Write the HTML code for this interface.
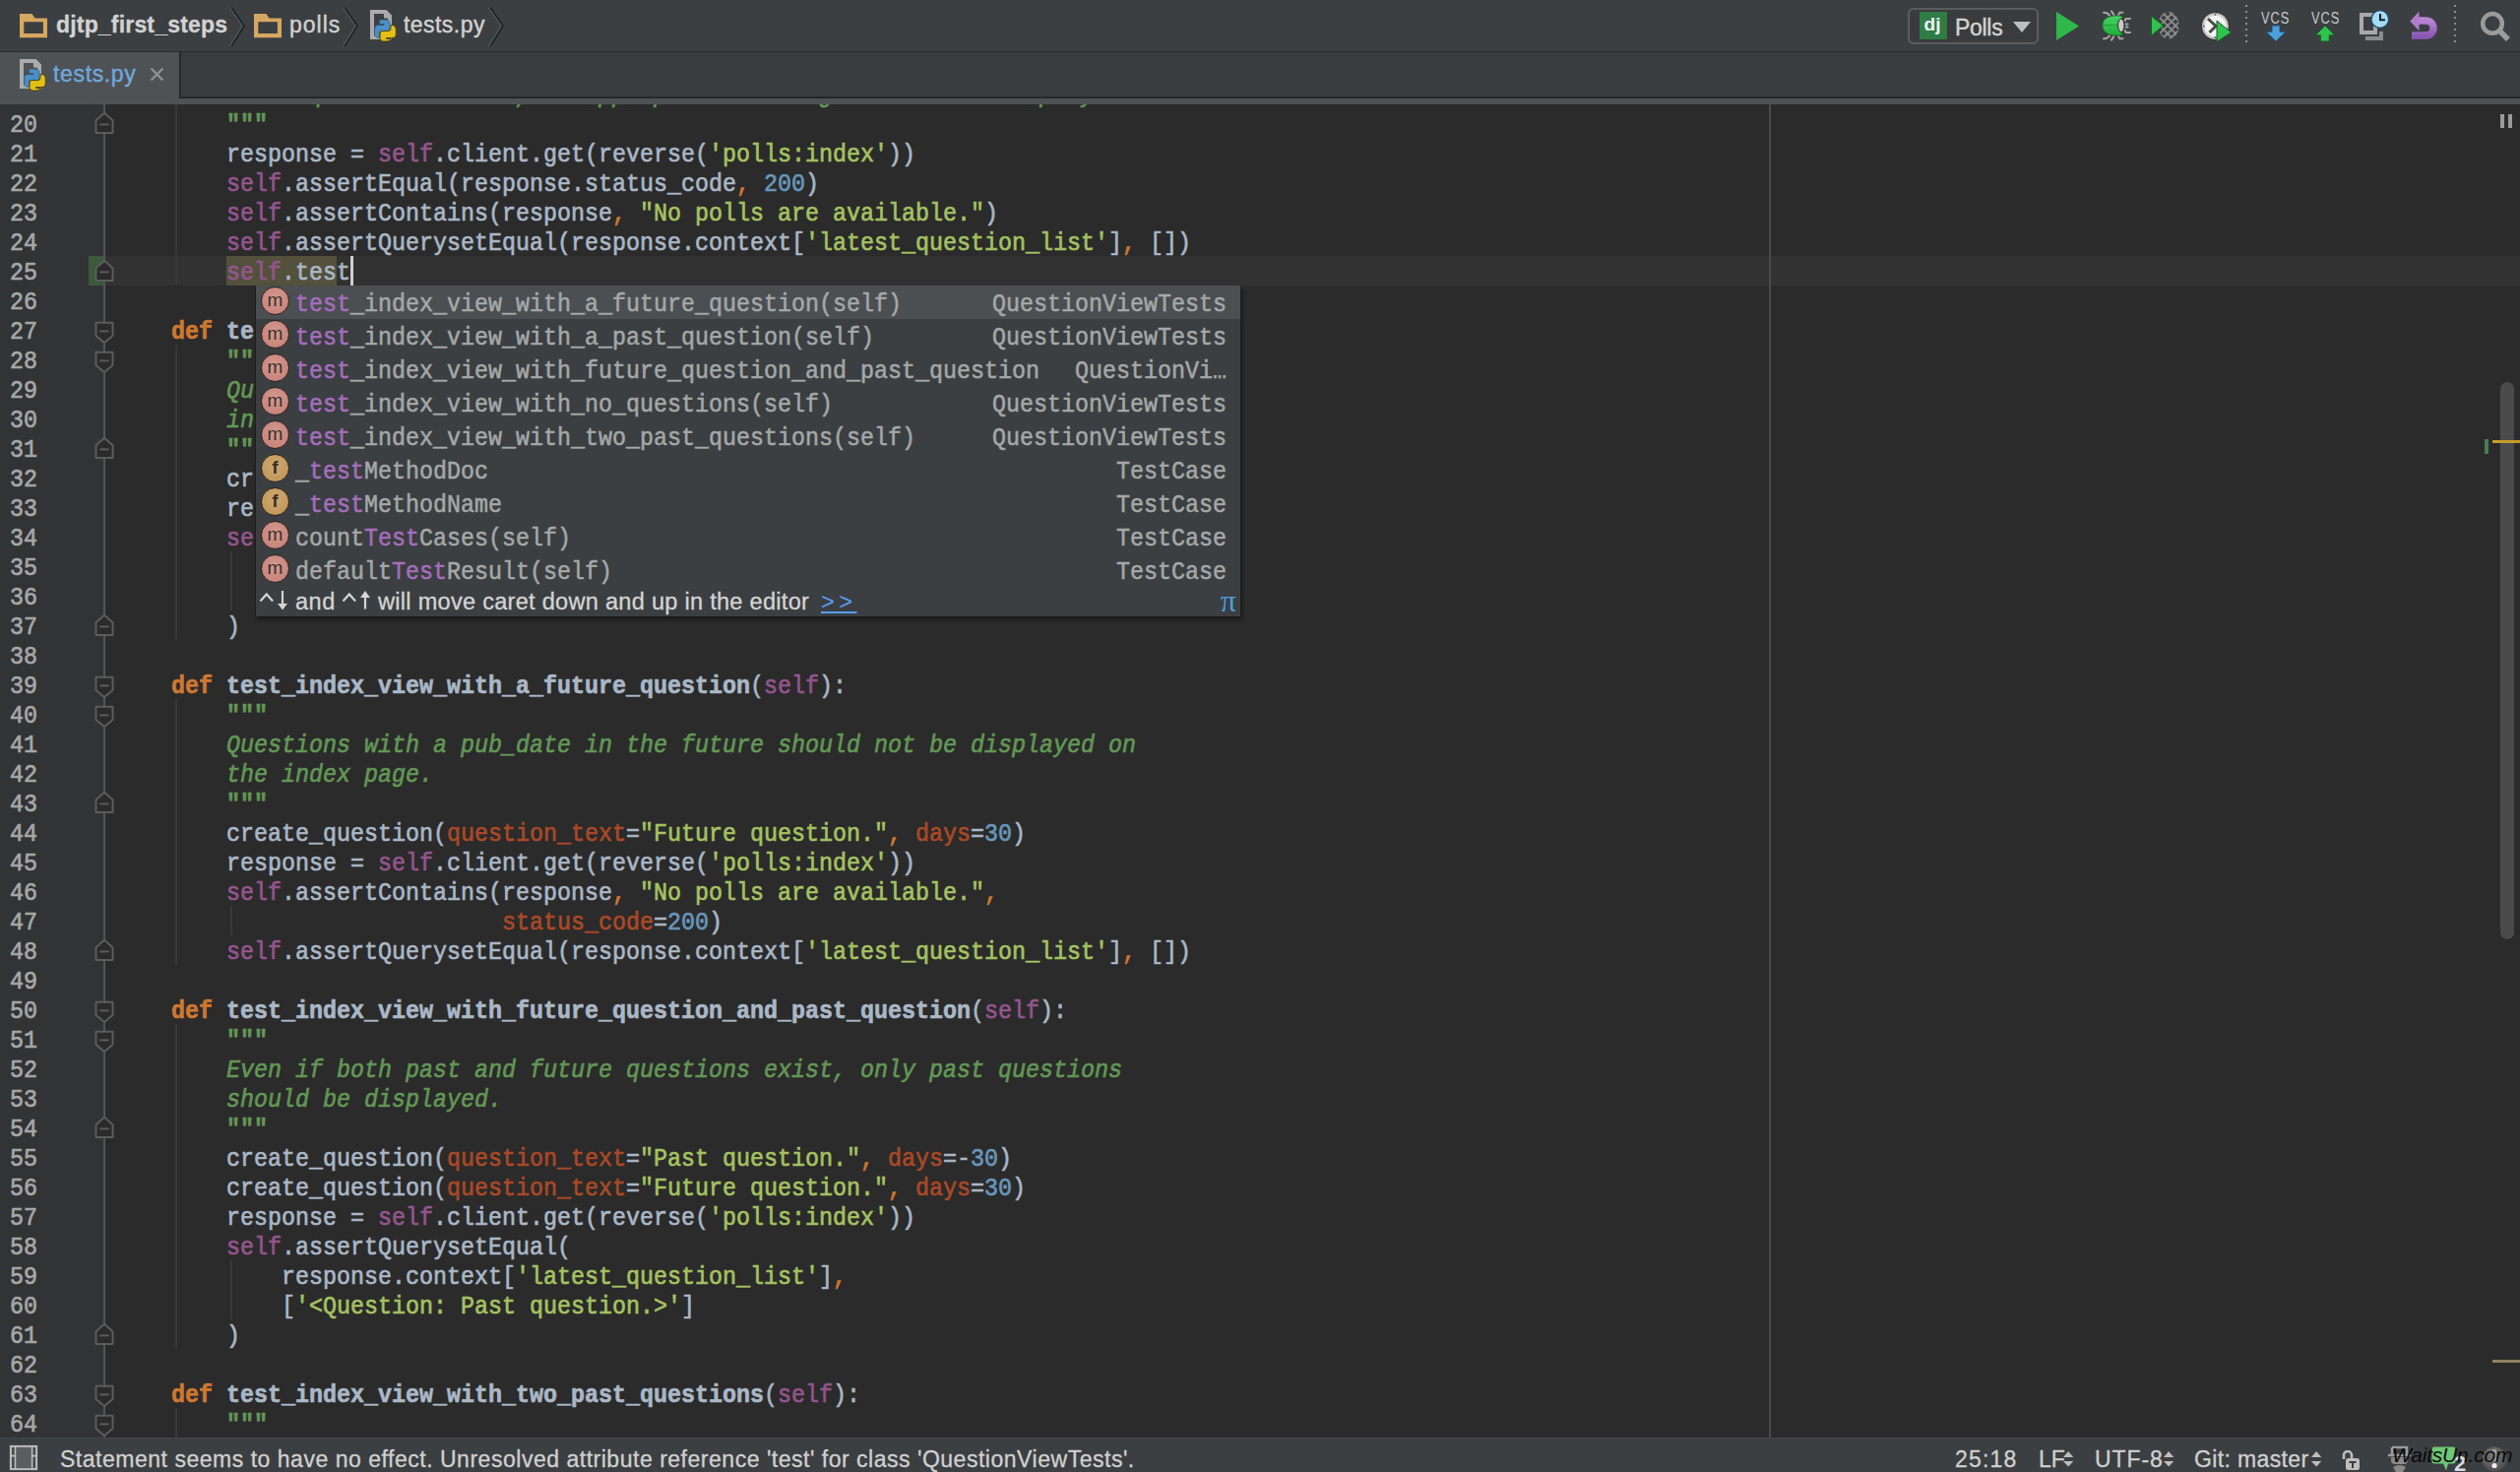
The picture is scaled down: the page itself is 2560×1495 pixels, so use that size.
<!DOCTYPE html>
<html><head><meta charset="utf-8"><title>tests.py</title><style>
*{margin:0;padding:0;box-sizing:border-box}
html,body{width:2560px;height:1495px;overflow:hidden;background:#2B2B2B}
body{position:relative;font-family:"Liberation Sans",sans-serif}
.abs{position:absolute}
#toolbar{position:absolute;left:0;top:0;width:2560px;height:53px;background:#3C3F41;border-bottom:1.4px solid #282A2B}
#tabbar{position:absolute;left:0;top:53px;width:2560px;height:53px;background:#4E5254}
#tabrest{position:absolute;left:182px;top:0;right:0;height:47px;background:#3A3D3F;border-left:2px solid #24282A;border-bottom:2px solid #24282A}
#editor{position:absolute;left:0;top:106px;width:2560px;height:1354px;overflow:hidden;background:#2B2B2B}
#gutter{position:absolute;left:0;top:0;width:105px;height:1354px;background:#313335}
.inner{position:absolute;left:0;top:-106px;width:2560px;height:1495px}
.ln{position:absolute;left:118px;height:30px;white-space:pre;font-family:"Liberation Mono",monospace;font-size:23.333px;line-height:30px;color:#A9B7C6;padding-top:3px;transform:scaleY(1.1);transform-origin:0 24.2px;-webkit-text-stroke:0.6px}
.num{position:absolute;left:0;width:38px;text-align:right;height:30px;white-space:pre;font-family:"Liberation Mono",monospace;font-size:23.333px;line-height:30px;color:#A6A8A8;padding-top:3px;transform:scaleY(1.1);transform-origin:0 24.2px;-webkit-text-stroke:0.6px}
.k{color:#CC7832;font-weight:bold}
.f{color:#A9B7C6;font-weight:bold}
.s{color:#94558D}
.S{color:#94558D}
.D{}
.t{color:#A5C261}
.c{color:#629755;font-style:italic}
.q{color:#629755;font-weight:bold}
.n{color:#6897BB}
.a{color:#AA4926}
.o{color:#CC7832}
.fold{position:absolute;left:96px}
.guide{position:absolute;width:2px;background:#393939}
#popup{position:absolute;left:259px;top:290px;width:1001px;height:336px;background:#3C3F41;border-left:1px solid #1E1E1E;box-shadow:2px 3px 4px rgba(0,0,0,0.45)}
.prow{position:absolute;left:0;width:1000px;height:34px}
.prow.sel{background:#4B4F52}
.pic{position:absolute;left:5px;top:1px;width:29px;height:29px;border-radius:50%;font-family:"Liberation Sans",sans-serif;font-size:19px;line-height:26px;text-align:center;color:#3A2E2E}
.pic.m{background:radial-gradient(circle at 50% 40%,#D29A90 0,#C9857B 70%);border:1.5px solid #2A2222}
.pic.f{background:radial-gradient(circle at 50% 40%,#CFA870 0,#C3985C 70%);border:1.5px solid #2A2420;color:#3A3025}
.pname{position:absolute;left:40px;top:0;height:34px;line-height:34px;padding-top:3px;white-space:pre;font-family:"Liberation Mono",monospace;font-size:23.333px;color:#A4A8A8;transform:scaleY(1.1);transform-origin:0 26px;-webkit-text-stroke:0.5px}
.ptype{position:absolute;right:14px;top:0;height:34px;line-height:34px;padding-top:3px;white-space:pre;font-family:"Liberation Mono",monospace;font-size:23.333px;color:#A4A8A8;transform:scaleY(1.1);transform-origin:0 26px;-webkit-text-stroke:0.5px}
.hl{color:#A46EBC}
#pand{position:absolute;left:40px;top:306px;height:30px;line-height:30px;font-size:23.5px;color:#D4D4D4;white-space:pre;letter-spacing:0.5px;-webkit-text-stroke:0.3px}
#pfoot{position:absolute;left:124px;top:306px;height:30px;line-height:30px;font-size:23.5px;color:#D4D4D4;white-space:pre;letter-spacing:0.3px;-webkit-text-stroke:0.3px}
#plink{position:absolute;left:574px;top:306px;height:30px;line-height:30px;font-size:23.5px;letter-spacing:4.5px;color:#589DF6;white-space:pre;text-decoration:underline}
#pi{position:absolute;right:4px;top:305px;height:30px;line-height:30px;font-size:32px;color:#4E9ED8;font-family:"Liberation Serif",serif}
#status{position:absolute;left:0;top:1460px;width:2560px;height:35px;background:#3C3F41;border-top:1px solid #444749}
.ui{position:absolute;white-space:pre;font-family:"Liberation Sans",sans-serif;color:#D0D0D0}
</style></head>
<body>
<div id="toolbar">
<svg class="abs" style="left:20px;top:14px" width="29" height="25" viewBox="0 0 29 25"><path d="M0 0 H12.5 L15.5 4.6 H28 V24.2 H0 Z" fill="#D5A862"/><rect x="4.3" y="8.2" width="19.6" height="11.8" fill="#3C3F41"/></svg>
<div class="ui" style="left:57px;top:9px;font-size:23px;font-weight:bold;line-height:32px;color:#D2D2D2;letter-spacing:0.18px;-webkit-text-stroke:0.3px">djtp_first_steps</div>
<svg class="abs" style="left:231.5px;top:4px" width="20" height="46" viewBox="0 0 20 46"><path d="M1.5 3.6 L14.5 22.3 L1.5 43.2" fill="none" stroke="#565A5D" stroke-width="1.5"/><path d="M3 3.6 L16 22.3 L3 43.2" fill="none" stroke="#1C1E20" stroke-width="1.6"/></svg>
<svg class="abs" style="left:258px;top:14px" width="29" height="25" viewBox="0 0 29 25"><path d="M0 0 H12.5 L15.5 4.6 H28 V24.2 H0 Z" fill="#D5A862"/><rect x="4.3" y="8.2" width="19.6" height="11.8" fill="#3C3F41"/></svg>
<div class="ui" style="left:294px;top:9px;font-size:23px;line-height:32px;color:#D2D2D2;letter-spacing:1px;-webkit-text-stroke:0.4px">polls</div>
<svg class="abs" style="left:346.8px;top:4px" width="20" height="46" viewBox="0 0 20 46"><path d="M1.5 3.6 L14.5 22.3 L1.5 43.2" fill="none" stroke="#565A5D" stroke-width="1.5"/><path d="M3 3.6 L16 22.3 L3 43.2" fill="none" stroke="#1C1E20" stroke-width="1.6"/></svg>
<svg class="abs" style="left:376px;top:10px" width="28" height="34" viewBox="0 0 28 34"><path fill-rule="evenodd" d="M0 0 H16.5 L22 5.5 V30 H0 Z M4 4 H14 V8.5 H18 V26 H4 Z" fill="#ABABAD"/><path d="M9.5 10 H15.5 Q20 10 20 14 V19 Q20 21.5 17.5 21.5 H11.5 Q9.5 21.5 9.5 23.5 V28.4 H8.5 Q4.5 28.4 4.5 24 V19 Q4.5 15.5 8 15.5 H14 V14.5 H9.5 Z" fill="#4A8FC6" stroke="#2E4A60" stroke-width="0.6"/><path d="M17 32 H13.5 Q10 32 10 28.5 V24 Q10 21.5 12.5 21.5 H18.5 Q21 21.5 21 19 V15.5 H22 Q26.3 15.5 26.3 20 V25 Q26.3 28.5 23 28.5 H16.5 V29.5 H21 Q21 32 17 32 Z" fill="#E3BE17" stroke="#3A3210" stroke-width="0.8"/></svg>
<div class="ui" style="left:410px;top:9px;font-size:23px;line-height:32px;color:#D2D2D2;letter-spacing:0.45px;-webkit-text-stroke:0.4px">tests.py</div>
<svg class="abs" style="left:494.8px;top:4px" width="20" height="46" viewBox="0 0 20 46"><path d="M1.5 3.6 L14.5 22.3 L1.5 43.2" fill="none" stroke="#565A5D" stroke-width="1.5"/><path d="M3 3.6 L16 22.3 L3 43.2" fill="none" stroke="#1C1E20" stroke-width="1.6"/></svg>
<div class="abs" style="left:1938px;top:8px;width:133px;height:37px;border:2px solid #5A5C5E;border-radius:6px;background:#3A3B3C"></div>
<div class="abs" style="left:1950px;top:12px;width:28px;height:28px;background:#2F7D45"></div>
<div class="ui" style="left:1951px;top:10px;width:24px;text-align:center;font-size:19px;font-weight:bold;line-height:30px;color:#F2F2F2">dj</div>
<div class="ui" style="left:1986px;top:12px;font-size:23px;line-height:32px;color:#D4D4D4;-webkit-text-stroke:0.4px;letter-spacing:-0.3px">Polls</div>
<svg class="abs" style="left:2045px;top:22px" width="18" height="11"><path d="M0 0 H18 L9 11 Z" fill="#BDBDBD"/></svg>
<svg class="abs" style="left:2089px;top:12px" width="23" height="29"><path d="M0 0 L23 14.5 L0 29 Z" fill="#2EB84A"/></svg>
<svg class="abs" style="left:2134px;top:10px" width="32" height="32" viewBox="0 0 32 32"><defs><linearGradient id="bg1" x1="0" y1="0" x2="0" y2="1"><stop offset="0" stop-color="#46D263"/><stop offset="1" stop-color="#1DAE38"/></linearGradient></defs><g stroke="#A6A6A6" stroke-width="2" fill="none" stroke-linecap="round"><path d="M3 2.8 Q7 2.5 9.2 6"/><path d="M11 1.4 L13.5 5.3"/><path d="M22.4 2.8 H19.8 Q18.5 3 18 6"/><path d="M3 29.2 Q7 29.5 9.2 26"/><path d="M11 30.6 L13.5 26.7"/><path d="M22.4 29.2 H19.8 Q18.5 29 18 26"/><path d="M30 8.9 H25.8 Q24.8 9.5 24.8 11"/><path d="M25.5 14.6 H27.5"/><path d="M25.5 17.4 H27.5"/><path d="M30 23 H25.8 Q24.8 22.5 24.8 21"/></g><path d="M22 6.3 Q10 4.5 4 9.5 Q1.7 12.5 1.7 16 Q1.7 19.5 4 22.5 Q10 27.5 22 25.7 Z" fill="url(#bg1)" stroke="#1F4F28" stroke-width="0.8"/><path d="M2 15.5 H18" stroke="#1E8E32" stroke-width="0.8"/><ellipse cx="20.8" cy="15.8" rx="3.2" ry="6.8" fill="#C9C9C9" stroke="#262626" stroke-width="1"/></svg>
<svg class="abs" style="left:2184px;top:10px" width="32" height="32" viewBox="0 0 32 32"><defs><clipPath id="cc"><ellipse cx="19" cy="15.8" rx="10.6" ry="13.8"/></clipPath></defs><g clip-path="url(#cc)"><path d="M-38 0 L-6 32 M-38 32 L-6 0 M-30 0 L2 32 M-30 32 L2 0 M-22 0 L10 32 M-22 32 L10 0 M-14 0 L18 32 M-14 32 L18 0 M-6 0 L26 32 M-6 32 L26 0 M2 0 L34 32 M2 32 L34 0 M10 0 L42 32 M10 32 L42 0 M18 0 L50 32 M18 32 L50 0 M26 0 L58 32 M26 32 L58 0 M34 0 L66 32 M34 32 L66 0" stroke="#8C8C8C" stroke-width="1.9" fill="none"/></g><path d="M1.4 6 L14 16 L1.4 26.4 Z" fill="#33C24D" stroke="#1A5A28" stroke-width="1.1"/></svg>
<svg class="abs" style="left:2234px;top:10px" width="36" height="36" viewBox="0 0 36 36"><defs><radialGradient id="pg" cx="0.5" cy="0.5" r="0.5"><stop offset="0.7" stop-color="#F4F4F4"/><stop offset="1" stop-color="#9A9A9A"/></radialGradient></defs><circle cx="16.4" cy="16.5" r="14.2" fill="url(#pg)" stroke="#262626" stroke-width="1"/><circle cx="16.4" cy="4.8" r="1.1" fill="#6A6A6A"/><circle cx="4.9" cy="16.5" r="1.1" fill="#6A6A6A"/><circle cx="16.4" cy="28.2" r="1.1" fill="#6A6A6A"/><path d="M9 9 L17 16.5 L10.5 23" stroke="#4A4A4A" stroke-width="3" fill="none"/><path d="M18 11 L32.6 23 L18 32.6 Z" fill="#2FC24C" stroke="#1B5A26" stroke-width="1"/></svg>
<div class="abs" style="left:2281px;top:5px;width:2.4px;height:40px;background:repeating-linear-gradient(to bottom,#8E8E8E 0 2.4px,transparent 2.4px 6px)"></div>
<div class="abs" style="left:2493px;top:5px;width:2.4px;height:40px;background:repeating-linear-gradient(to bottom,#8E8E8E 0 2.4px,transparent 2.4px 6px)"></div>
<div class="ui" style="left:2297px;top:10px;font-size:16px;line-height:18px;color:#C8C8C8;transform:scaleX(0.8);transform-origin:0 0;letter-spacing:1.2px">VCS</div>
<svg class="abs" style="left:2301px;top:25px" width="22" height="18" viewBox="0 0 22 18"><path d="M7 1 H15 V7.2 H21 L11 17 L1 7.2 H7 Z" fill="#4BA0DA" stroke="#1F4E70" stroke-width="0.9"/></svg>
<div class="ui" style="left:2348px;top:10px;font-size:16px;line-height:18px;color:#C8C8C8;transform:scaleX(0.8);transform-origin:0 0;letter-spacing:1.2px">VCS</div>
<svg class="abs" style="left:2351px;top:25px" width="22" height="18" viewBox="0 0 22 18"><path d="M6.5 17 H15.2 V10.7 H20.7 L11 1 L1.3 10.7 H6.5 Z" fill="#2FC24C" stroke="#1B5A26" stroke-width="0.9"/></svg>
<svg class="abs" style="left:2396px;top:9px" width="34" height="34" viewBox="0 0 34 34"><path d="M7 30 H23 V23" fill="none" stroke="#8C8C8C" stroke-width="4"/><rect x="3" y="6" width="14" height="18" fill="none" stroke="#A8A8A8" stroke-width="4"/><circle cx="21.8" cy="10.5" r="8.8" fill="#A6DBF4" stroke="#1E4E6E" stroke-width="1.3"/><path d="M22 5 V11.2 H27" stroke="#10202A" stroke-width="2" fill="none"/></svg>
<svg class="abs" style="left:2446px;top:10px" width="32" height="32" viewBox="0 0 32 32"><defs><linearGradient id="ug" x1="0" y1="0" x2="0" y2="1"><stop offset="0" stop-color="#B884D2"/><stop offset="1" stop-color="#8C58B6"/></linearGradient></defs><path d="M10 11 H18.5 A7.5 7.5 0 0 1 18.5 26 H4" fill="none" stroke="url(#ug)" stroke-width="7.5"/><path d="M2.3 11.5 L11.5 1.5 V21.5 Z" fill="#B07CCC"/></svg>
<svg class="abs" style="left:2516px;top:8px" width="36" height="36" viewBox="0 0 36 36"><circle cx="16" cy="15.9" r="9.8" fill="none" stroke="#9B9B9B" stroke-width="4.5"/><path d="M23.5 23.5 L32 32" stroke="#9B9B9B" stroke-width="5.5"/></svg>
</div>
<div id="tabbar"><div id="tabrest"></div>
<svg class="abs" style="left:20px;top:7px" width="28" height="34" viewBox="0 0 28 34"><path fill-rule="evenodd" d="M0 0 H16.5 L22 5.5 V30 H0 Z M4 4 H14 V8.5 H18 V26 H4 Z" fill="#ABABAD"/><path d="M9.5 10 H15.5 Q20 10 20 14 V19 Q20 21.5 17.5 21.5 H11.5 Q9.5 21.5 9.5 23.5 V28.4 H8.5 Q4.5 28.4 4.5 24 V19 Q4.5 15.5 8 15.5 H14 V14.5 H9.5 Z" fill="#4A8FC6" stroke="#2E4A60" stroke-width="0.6"/><path d="M17 32 H13.5 Q10 32 10 28.5 V24 Q10 21.5 12.5 21.5 H18.5 Q21 21.5 21 19 V15.5 H22 Q26.3 15.5 26.3 20 V25 Q26.3 28.5 23 28.5 H16.5 V29.5 H21 Q21 32 17 32 Z" fill="#E3BE17" stroke="#3A3210" stroke-width="0.8"/></svg>
<div class="ui" style="left:54px;top:6px;font-size:23px;line-height:32px;color:#6FA8DC;letter-spacing:0.65px;-webkit-text-stroke:0.4px">tests.py</div>
<svg class="abs" style="left:152px;top:15px" width="15" height="15"><path d="M1.5 1.5 L13.5 13.5 M13.5 1.5 L1.5 13.5" stroke="#8E9193" stroke-width="2.4"/></svg>
</div>
<div id="editor"><div class="inner">
<div class="abs" style="left:0;top:106px;width:105px;height:1354px;background:#313335"></div>
<div class="abs" style="left:105px;top:260px;width:2455px;height:30px;background:#323232"></div>
<div class="abs" style="left:90px;top:260px;width:15px;height:30px;background:#3A5A3A"></div>
<div class="abs" style="left:230px;top:260px;width:112px;height:30px;background:#53513B"></div>
<div class="abs" style="left:1797px;top:106px;width:2px;height:1354px;background:#4A4A4A"></div>
<div class="abs" style="left:105px;top:106px;width:2px;height:1354px;background:#555555"></div>
<div class="guide" style="left:178px;top:80px;height:210px"></div>
<div class="guide" style="left:178px;top:350px;height:300px"></div>
<div class="guide" style="left:178px;top:710px;height:270px"></div>
<div class="guide" style="left:178px;top:1040px;height:330px"></div>
<div class="guide" style="left:178px;top:1430px;height:60px"></div>
<div class="guide" style="left:234px;top:560px;height:60px"></div>
<div class="guide" style="left:234px;top:920px;height:30px"></div>
<div class="guide" style="left:234px;top:1280px;height:60px"></div>
<div class="num" style="top:80px">19</div>
<div class="num" style="top:110px">20</div>
<div class="num" style="top:140px">21</div>
<div class="num" style="top:170px">22</div>
<div class="num" style="top:200px">23</div>
<div class="num" style="top:230px">24</div>
<div class="num" style="top:260px">25</div>
<div class="num" style="top:290px">26</div>
<div class="num" style="top:320px">27</div>
<div class="num" style="top:350px">28</div>
<div class="num" style="top:380px">29</div>
<div class="num" style="top:410px">30</div>
<div class="num" style="top:440px">31</div>
<div class="num" style="top:470px">32</div>
<div class="num" style="top:500px">33</div>
<div class="num" style="top:530px">34</div>
<div class="num" style="top:560px">35</div>
<div class="num" style="top:590px">36</div>
<div class="num" style="top:620px">37</div>
<div class="num" style="top:650px">38</div>
<div class="num" style="top:680px">39</div>
<div class="num" style="top:710px">40</div>
<div class="num" style="top:740px">41</div>
<div class="num" style="top:770px">42</div>
<div class="num" style="top:800px">43</div>
<div class="num" style="top:830px">44</div>
<div class="num" style="top:860px">45</div>
<div class="num" style="top:890px">46</div>
<div class="num" style="top:920px">47</div>
<div class="num" style="top:950px">48</div>
<div class="num" style="top:980px">49</div>
<div class="num" style="top:1010px">50</div>
<div class="num" style="top:1040px">51</div>
<div class="num" style="top:1070px">52</div>
<div class="num" style="top:1100px">53</div>
<div class="num" style="top:1130px">54</div>
<div class="num" style="top:1160px">55</div>
<div class="num" style="top:1190px">56</div>
<div class="num" style="top:1220px">57</div>
<div class="num" style="top:1250px">58</div>
<div class="num" style="top:1280px">59</div>
<div class="num" style="top:1310px">60</div>
<div class="num" style="top:1340px">61</div>
<div class="num" style="top:1370px">62</div>
<div class="num" style="top:1400px">63</div>
<div class="num" style="top:1430px">64</div>
<svg class="fold" style="top:113px" width="20" height="27" viewBox="0 0 20 27"><path d="M1.5 22 V9.2 L10 1.7 L18.5 9.2 V22 Z" fill="#2B2B2B" stroke="#5C5C5C" stroke-width="2" stroke-linejoin="round"/><path d="M5.3 13.4 H14.7" stroke="#5C5C5C" stroke-width="2"/></svg>
<svg class="fold" style="top:263px" width="20" height="27" viewBox="0 0 20 27"><path d="M1.5 22 V9.2 L10 1.7 L18.5 9.2 V22 Z" fill="#2B2B2B" stroke="#5C5C5C" stroke-width="2" stroke-linejoin="round"/><path d="M5.3 13.4 H14.7" stroke="#5C5C5C" stroke-width="2"/></svg>
<svg class="fold" style="top:443px" width="20" height="27" viewBox="0 0 20 27"><path d="M1.5 22 V9.2 L10 1.7 L18.5 9.2 V22 Z" fill="#2B2B2B" stroke="#5C5C5C" stroke-width="2" stroke-linejoin="round"/><path d="M5.3 13.4 H14.7" stroke="#5C5C5C" stroke-width="2"/></svg>
<svg class="fold" style="top:623px" width="20" height="27" viewBox="0 0 20 27"><path d="M1.5 22 V9.2 L10 1.7 L18.5 9.2 V22 Z" fill="#2B2B2B" stroke="#5C5C5C" stroke-width="2" stroke-linejoin="round"/><path d="M5.3 13.4 H14.7" stroke="#5C5C5C" stroke-width="2"/></svg>
<svg class="fold" style="top:803px" width="20" height="27" viewBox="0 0 20 27"><path d="M1.5 22 V9.2 L10 1.7 L18.5 9.2 V22 Z" fill="#2B2B2B" stroke="#5C5C5C" stroke-width="2" stroke-linejoin="round"/><path d="M5.3 13.4 H14.7" stroke="#5C5C5C" stroke-width="2"/></svg>
<svg class="fold" style="top:953px" width="20" height="27" viewBox="0 0 20 27"><path d="M1.5 22 V9.2 L10 1.7 L18.5 9.2 V22 Z" fill="#2B2B2B" stroke="#5C5C5C" stroke-width="2" stroke-linejoin="round"/><path d="M5.3 13.4 H14.7" stroke="#5C5C5C" stroke-width="2"/></svg>
<svg class="fold" style="top:1133px" width="20" height="27" viewBox="0 0 20 27"><path d="M1.5 22 V9.2 L10 1.7 L18.5 9.2 V22 Z" fill="#2B2B2B" stroke="#5C5C5C" stroke-width="2" stroke-linejoin="round"/><path d="M5.3 13.4 H14.7" stroke="#5C5C5C" stroke-width="2"/></svg>
<svg class="fold" style="top:1343px" width="20" height="27" viewBox="0 0 20 27"><path d="M1.5 22 V9.2 L10 1.7 L18.5 9.2 V22 Z" fill="#2B2B2B" stroke="#5C5C5C" stroke-width="2" stroke-linejoin="round"/><path d="M5.3 13.4 H14.7" stroke="#5C5C5C" stroke-width="2"/></svg>
<svg class="fold" style="top:323px" width="20" height="27" viewBox="0 0 20 27"><path d="M1.5 4.7 V17.9 L10 25 L18.5 17.9 V4.7 Z" fill="#2B2B2B" stroke="#5C5C5C" stroke-width="2" stroke-linejoin="round"/><path d="M5.3 13.4 H14.7" stroke="#5C5C5C" stroke-width="2"/></svg>
<svg class="fold" style="top:353px" width="20" height="27" viewBox="0 0 20 27"><path d="M1.5 4.7 V17.9 L10 25 L18.5 17.9 V4.7 Z" fill="#2B2B2B" stroke="#5C5C5C" stroke-width="2" stroke-linejoin="round"/><path d="M5.3 13.4 H14.7" stroke="#5C5C5C" stroke-width="2"/></svg>
<svg class="fold" style="top:683px" width="20" height="27" viewBox="0 0 20 27"><path d="M1.5 4.7 V17.9 L10 25 L18.5 17.9 V4.7 Z" fill="#2B2B2B" stroke="#5C5C5C" stroke-width="2" stroke-linejoin="round"/><path d="M5.3 13.4 H14.7" stroke="#5C5C5C" stroke-width="2"/></svg>
<svg class="fold" style="top:713px" width="20" height="27" viewBox="0 0 20 27"><path d="M1.5 4.7 V17.9 L10 25 L18.5 17.9 V4.7 Z" fill="#2B2B2B" stroke="#5C5C5C" stroke-width="2" stroke-linejoin="round"/><path d="M5.3 13.4 H14.7" stroke="#5C5C5C" stroke-width="2"/></svg>
<svg class="fold" style="top:1013px" width="20" height="27" viewBox="0 0 20 27"><path d="M1.5 4.7 V17.9 L10 25 L18.5 17.9 V4.7 Z" fill="#2B2B2B" stroke="#5C5C5C" stroke-width="2" stroke-linejoin="round"/><path d="M5.3 13.4 H14.7" stroke="#5C5C5C" stroke-width="2"/></svg>
<svg class="fold" style="top:1043px" width="20" height="27" viewBox="0 0 20 27"><path d="M1.5 4.7 V17.9 L10 25 L18.5 17.9 V4.7 Z" fill="#2B2B2B" stroke="#5C5C5C" stroke-width="2" stroke-linejoin="round"/><path d="M5.3 13.4 H14.7" stroke="#5C5C5C" stroke-width="2"/></svg>
<svg class="fold" style="top:1403px" width="20" height="27" viewBox="0 0 20 27"><path d="M1.5 4.7 V17.9 L10 25 L18.5 17.9 V4.7 Z" fill="#2B2B2B" stroke="#5C5C5C" stroke-width="2" stroke-linejoin="round"/><path d="M5.3 13.4 H14.7" stroke="#5C5C5C" stroke-width="2"/></svg>
<svg class="fold" style="top:1433px" width="20" height="27" viewBox="0 0 20 27"><path d="M1.5 4.7 V17.9 L10 25 L18.5 17.9 V4.7 Z" fill="#2B2B2B" stroke="#5C5C5C" stroke-width="2" stroke-linejoin="round"/><path d="M5.3 13.4 H14.7" stroke="#5C5C5C" stroke-width="2"/></svg>
<div class="ln" style="top:80px">        <span class="c">If no questions exist, an appropriate message should be displayed.</span></div>
<div class="ln" style="top:110px">        <span class="q">"""</span></div>
<div class="ln" style="top:140px">        response = <span class="s">self</span>.client.get(reverse(<span class="t">'polls:index'</span>))</div>
<div class="ln" style="top:170px">        <span class="s">self</span>.assertEqual(response.status_code<span class="o">, </span><span class="n">200</span>)</div>
<div class="ln" style="top:200px">        <span class="s">self</span>.assertContains(response<span class="o">, </span><span class="t">"No polls are available."</span>)</div>
<div class="ln" style="top:230px">        <span class="s">self</span>.assertQuerysetEqual(response.context[<span class="t">'latest_question_list'</span>]<span class="o">, </span>[])</div>
<div class="ln" style="top:260px">        <span class="S">self</span><span class="D">.tes</span>t</div>
<div class="ln" style="top:320px">    <span class="k">def </span><span class="f">test_index_view_with_a_past_question</span>(<span class="s">self</span>):</div>
<div class="ln" style="top:350px">        <span class="q">"""</span></div>
<div class="ln" style="top:380px">        <span class="c">Questions with a pub_date in the past should be displayed on the</span></div>
<div class="ln" style="top:410px">        <span class="c">index page.</span></div>
<div class="ln" style="top:440px">        <span class="q">"""</span></div>
<div class="ln" style="top:470px">        create_question(</div>
<div class="ln" style="top:500px">        response = </div>
<div class="ln" style="top:530px">        <span class="s">self</span>.assertQuerysetEqual(</div>
<div class="ln" style="top:620px">        )</div>
<div class="ln" style="top:680px">    <span class="k">def </span><span class="f">test_index_view_with_a_future_question</span>(<span class="s">self</span>):</div>
<div class="ln" style="top:710px">        <span class="q">"""</span></div>
<div class="ln" style="top:740px">        <span class="c">Questions with a pub_date in the future should not be displayed on</span></div>
<div class="ln" style="top:770px">        <span class="c">the index page.</span></div>
<div class="ln" style="top:800px">        <span class="q">"""</span></div>
<div class="ln" style="top:830px">        create_question(<span class="a">question_text</span>=<span class="t">"Future question."</span><span class="o">, </span><span class="a">days</span>=<span class="n">30</span>)</div>
<div class="ln" style="top:860px">        response = <span class="s">self</span>.client.get(reverse(<span class="t">'polls:index'</span>))</div>
<div class="ln" style="top:890px">        <span class="s">self</span>.assertContains(response<span class="o">, </span><span class="t">"No polls are available."</span><span class="o">,</span></div>
<div class="ln" style="top:920px">                            <span class="a">status_code</span>=<span class="n">200</span>)</div>
<div class="ln" style="top:950px">        <span class="s">self</span>.assertQuerysetEqual(response.context[<span class="t">'latest_question_list'</span>]<span class="o">, </span>[])</div>
<div class="ln" style="top:1010px">    <span class="k">def </span><span class="f">test_index_view_with_future_question_and_past_question</span>(<span class="s">self</span>):</div>
<div class="ln" style="top:1040px">        <span class="q">"""</span></div>
<div class="ln" style="top:1070px">        <span class="c">Even if both past and future questions exist, only past questions</span></div>
<div class="ln" style="top:1100px">        <span class="c">should be displayed.</span></div>
<div class="ln" style="top:1130px">        <span class="q">"""</span></div>
<div class="ln" style="top:1160px">        create_question(<span class="a">question_text</span>=<span class="t">"Past question."</span><span class="o">, </span><span class="a">days</span>=-<span class="n">30</span>)</div>
<div class="ln" style="top:1190px">        create_question(<span class="a">question_text</span>=<span class="t">"Future question."</span><span class="o">, </span><span class="a">days</span>=<span class="n">30</span>)</div>
<div class="ln" style="top:1220px">        response = <span class="s">self</span>.client.get(reverse(<span class="t">'polls:index'</span>))</div>
<div class="ln" style="top:1250px">        <span class="s">self</span>.assertQuerysetEqual(</div>
<div class="ln" style="top:1280px">            response.context[<span class="t">'latest_question_list'</span>]<span class="o">,</span></div>
<div class="ln" style="top:1310px">            [<span class="t">'&lt;Question: Past question.&gt;'</span>]</div>
<div class="ln" style="top:1340px">        )</div>
<div class="ln" style="top:1400px">    <span class="k">def </span><span class="f">test_index_view_with_two_past_questions</span>(<span class="s">self</span>):</div>
<div class="ln" style="top:1430px">        <span class="q">"""</span></div>
<div class="abs" style="left:356px;top:260px;width:3px;height:30px;background:#D0D0D0"></div>
<div class="abs" style="left:2540px;top:116px;width:4px;height:14px;background:#9A9A9A"></div><div class="abs" style="left:2548px;top:116px;width:4px;height:14px;background:#9A9A9A"></div>
<div class="abs" style="left:2540px;top:388px;width:14px;height:566px;border-radius:7px;background:#4B4B4B"></div>
<div class="abs" style="left:2532px;top:447px;width:28px;height:3px;background:#C59A2A"></div>
<div class="abs" style="left:2524px;top:446px;width:4px;height:15px;background:#4A7A58"></div>
<div class="abs" style="left:2532px;top:1381px;width:28px;height:3px;background:#8C8162"></div>
<div id="popup">
<div class="prow sel" style="top:0px"><div class="pic m">m</div><div class="pname"><span class="hl">test</span>_index_view_with_a_future_question(self)</div><div class="ptype">QuestionViewTests</div></div>
<div class="prow" style="top:34px"><div class="pic m">m</div><div class="pname"><span class="hl">test</span>_index_view_with_a_past_question(self)</div><div class="ptype">QuestionViewTests</div></div>
<div class="prow" style="top:68px"><div class="pic m">m</div><div class="pname"><span class="hl">test</span>_index_view_with_future_question_and_past_question</div><div class="ptype">QuestionVi…</div></div>
<div class="prow" style="top:102px"><div class="pic m">m</div><div class="pname"><span class="hl">test</span>_index_view_with_no_questions(self)</div><div class="ptype">QuestionViewTests</div></div>
<div class="prow" style="top:136px"><div class="pic m">m</div><div class="pname"><span class="hl">test</span>_index_view_with_two_past_questions(self)</div><div class="ptype">QuestionViewTests</div></div>
<div class="prow" style="top:170px"><div class="pic f">f</div><div class="pname">_<span class="hl">test</span>MethodDoc</div><div class="ptype">TestCase</div></div>
<div class="prow" style="top:204px"><div class="pic f">f</div><div class="pname">_<span class="hl">test</span>MethodName</div><div class="ptype">TestCase</div></div>
<div class="prow" style="top:238px"><div class="pic m">m</div><div class="pname">count<span class="hl">Test</span>Cases(self)</div><div class="ptype">TestCase</div></div>
<div class="prow" style="top:272px"><div class="pic m">m</div><div class="pname">default<span class="hl">Test</span>Result(self)</div><div class="ptype">TestCase</div></div>
<svg class="abs" style="left:0;top:306px" width="130" height="30" viewBox="0 0 130 30"><g stroke="#D4D4D4" stroke-width="2.2" fill="none"><path d="M4.5 14.5 L10.8 7.5 L17.1 14.5"/><path d="M27 4 V19"/><path d="M88.5 14.5 L94.8 7.5 L101.1 14.5"/><path d="M111 8 V22.5"/></g><path d="M22 17 H32 L27 23.5 Z" fill="#D4D4D4"/><path d="M106 11 H116 L111 4 Z" fill="#D4D4D4"/></svg><div id="pand">and</div><div id="pfoot">will move caret down and up in the editor</div><div id="plink">&gt;&gt;</div><div id="pi">π</div>
</div>
</div></div>
<div id="status">
<svg class="abs" style="left:9px;top:6px" width="30" height="30" viewBox="0 0 30 30"><rect x="1.9" y="1.9" width="26.2" height="23.2" fill="#4A4B4D" stroke="#BDBEBF" stroke-width="2"/><rect x="7.3" y="2.9" width="15.5" height="21.2" fill="#5C5D5F"/><path d="M6.5 1.9 V25.1 M23.6 1.9 V25.1 M1.9 11.6 H6.5 M23.6 11.6 H28.1" stroke="#BDBEBF" stroke-width="1.6"/><path d="M0.9 29 H29.1" stroke="#BDBEBF" stroke-width="2"/></svg>
<div class="ui" style="left:61px;top:6px;font-size:23px;line-height:30px;color:#D0D0D0;-webkit-text-stroke:0.3px;letter-spacing:0.52px">Statement seems to have no effect. Unresolved attribute reference 'test' for class 'QuestionViewTests'.</div>
<div class="ui" style="left:1986px;top:6px;font-size:23px;line-height:30px;color:#D0D0D0;-webkit-text-stroke:0.3px;letter-spacing:1.2px">25:18</div>
<div class="ui" style="left:2071px;top:6px;font-size:23px;line-height:30px;color:#D0D0D0;-webkit-text-stroke:0.3px">LF</div>
<div class="ui" style="left:2128px;top:6px;font-size:23px;line-height:30px;color:#D0D0D0;-webkit-text-stroke:0.3px;letter-spacing:0.9px">UTF-8</div>
<div class="ui" style="left:2229px;top:6px;font-size:23px;line-height:30px;color:#D0D0D0;-webkit-text-stroke:0.3px;letter-spacing:0.36px">Git: master</div>
<svg class="abs" style="left:2095.7px;top:13px" width="11" height="17"><path d="M0 6 L5.15 0 L10.3 6 Z M0 10 L10.3 10 L5.15 15.6 Z" fill="#BDBDBD"/></svg>
<svg class="abs" style="left:2198px;top:13px" width="11" height="17"><path d="M0 6 L5.15 0 L10.3 6 Z M0 10 L10.3 10 L5.15 15.6 Z" fill="#BDBDBD"/></svg>
<svg class="abs" style="left:2347.5px;top:13px" width="11" height="17"><path d="M0 6 L5.15 0 L10.3 6 Z M0 10 L10.3 10 L5.15 15.6 Z" fill="#BDBDBD"/></svg>
<svg class="abs" style="left:2378px;top:12px" width="21" height="21" viewBox="0 0 21 21"><path d="M3 9 V5 a4 4 0 0 1 8 0 V9" fill="none" stroke="#BDBDBD" stroke-width="2.6"/><rect x="5" y="8" width="14" height="12" rx="2.5" fill="#BDBDBD"/><path d="M8.5 12 H15.5 M12 12 V18" stroke="#3C3F41" stroke-width="2"/></svg>
<svg class="abs" style="left:2425px;top:7px" width="25" height="28" viewBox="0 0 25 28"><path d="M5 2 H20 V9 M5 2 V9 M1 10 H24" stroke="#9C9C9C" stroke-width="2.5" fill="none"/><path d="M4 12 H21 V15 Q21 19 17 19 H8 Q4 19 4 15 Z" fill="#8A8A8A"/><path d="M6 22 Q12.5 18 19 22 L16 27 H9 Z" fill="#8A8A8A"/></svg>
<svg class="abs" style="left:2470px;top:8px" width="25" height="25" viewBox="0 0 25 25"><path d="M3 0.5 H22 a2.5 2.5 0 0 1 2.5 2.5 V15 a2.5 2.5 0 0 1 -2.5 2.5 H17 L15 24.5 L12 17.5 H3 a2.5 2.5 0 0 1 -2.5 -2.5 V3 a2.5 2.5 0 0 1 2.5 -2.5 Z" fill="#6EC776"/></svg>
<div class="ui" style="left:2493px;top:15px;font-size:22px;font-weight:bold;line-height:22px;color:#D8DCE0">2</div>
<svg class="abs" style="left:2521px;top:8px" width="26" height="26"><defs><radialGradient id="gc" cx="0.45" cy="0.35" r="0.7"><stop offset="0" stop-color="#7A7A7A"/><stop offset="1" stop-color="#4A4A4A"/></radialGradient></defs><circle cx="13" cy="13" r="12.5" fill="url(#gc)"/><rect x="11" y="3" width="4" height="12" fill="#9A9A9A"/><circle cx="13" cy="19.5" r="2.6" fill="#EDEDED"/></svg>
<div class="ui" style="left:2430px;top:6px;font-size:21px;line-height:22px;color:#0A0A0A;font-style:italic;letter-spacing:-0.2px">WaitsUn.com</div>
</div>
</body></html>
